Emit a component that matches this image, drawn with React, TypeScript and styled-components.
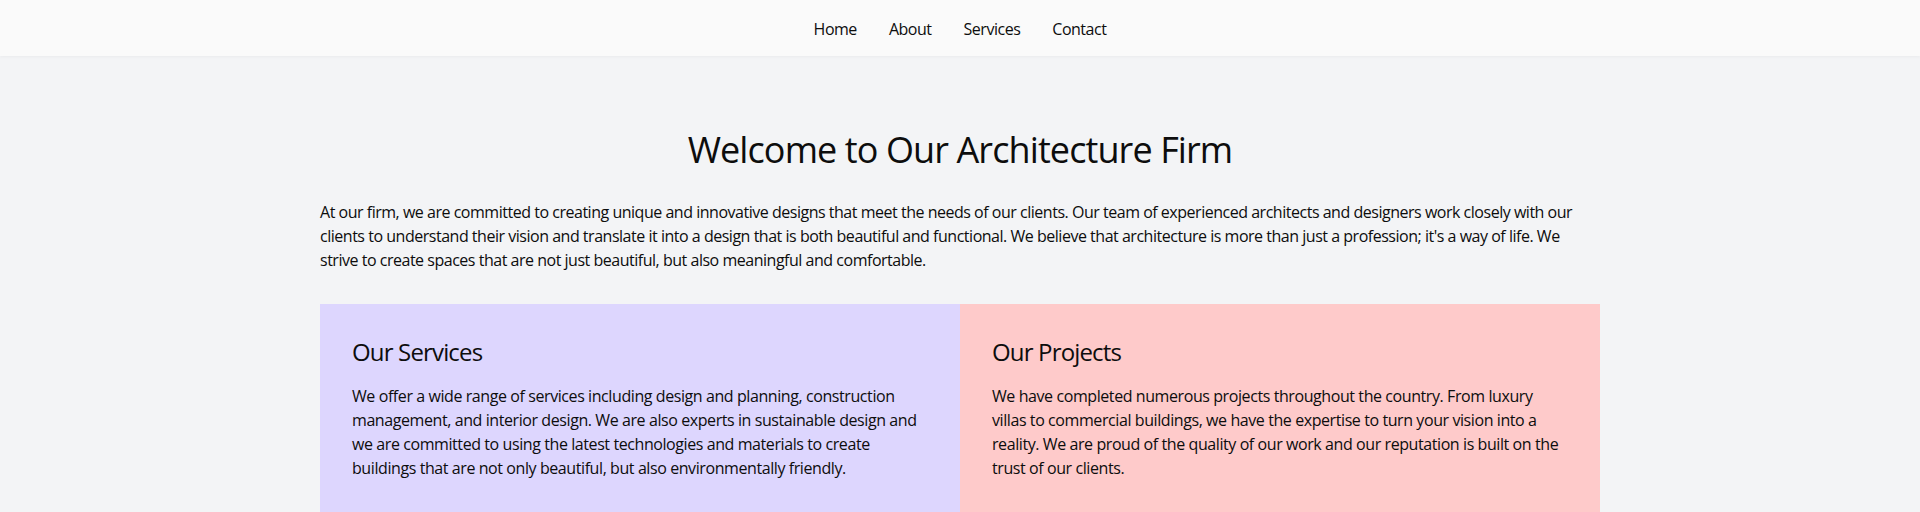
import React from "react";
import styled, { createGlobalStyle } from "styled-components";

const Global = createGlobalStyle`
  * { box-sizing: border-box; }
  body {
    margin: 0;
    background: #f3f4f6;
    color: #0d0d0d;
    font-family: "Open Sans", "Noto Sans", sans-serif;
    letter-spacing: -0.03em;
  }
`;

const Nav = styled.nav`
  background: #fafafa;
  height: 56px;
  padding-top: 2px;
  display: flex;
  justify-content: center;
  align-items: center;
  box-shadow: 0 1px 3px rgba(0, 0, 0, 0.04);
`;

const NavLink = styled.a`
  margin: 0 16px;
  font-size: 16px;
  line-height: 24px;
  color: #0d0d0d;
  text-decoration: none;
`;

const Main = styled.main`
  max-width: 1280px;
  margin: 0 auto;
  padding-top: 74px;
`;

const Title = styled.h1`
  margin: 0 0 30px;
  font-size: 36px;
  line-height: 40px;
  font-weight: 400;
  letter-spacing: -0.025em;
  text-align: center;
`;

const Intro = styled.p`
  margin: 0 0 32px;
  font-size: 16px;
  line-height: 24px;
`;

const Grid = styled.div`
  display: grid;
  grid-template-columns: 1fr 1fr;
`;

const Card = styled.section<{ $bg: string }>`
  background: ${(p) => p.$bg};
  padding: 32px;
`;

const CardTitle = styled.h2`
  margin: 0 0 16px;
  font-size: 24px;
  line-height: 32px;
  font-weight: 400;
  letter-spacing: -0.035em;
`;

const CardText = styled.p`
  margin: 0;
  font-size: 16px;
  line-height: 24px;
  letter-spacing: -0.026em;
`;

export default function App() {
  return (
    <>
      <Global />
      <Nav>
        <NavLink href="#">Home</NavLink>
        <NavLink href="#">About</NavLink>
        <NavLink href="#">Services</NavLink>
        <NavLink href="#">Contact</NavLink>
      </Nav>
      <Main>
        <Title>Welcome to Our Architecture Firm</Title>
        <Intro>
          At our firm, we are committed to creating unique and innovative designs that meet the needs of our clients. Our team of experienced architects and designers work closely with our clients to understand their vision and translate it into a design that is both beautiful and functional. We believe that architecture is more than just a profession; it's a way of life. We strive to create spaces that are not just beautiful, but also meaningful and comfortable.
        </Intro>
        <Grid>
          <Card $bg="#ddd6fe">
            <CardTitle>Our Services</CardTitle>
            <CardText>
              We offer a wide range of services including design and planning, construction management, and interior design. We are also experts in sustainable design and we are committed to using the latest technologies and materials to create buildings that are not only beautiful, but also environmentally friendly.
            </CardText>
          </Card>
          <Card $bg="#fecaca">
            <CardTitle>Our Projects</CardTitle>
            <CardText>
              We have completed numerous projects throughout the country. From luxury villas to commercial buildings, we have the expertise to turn your vision into a reality. We are proud of the quality of our work and our reputation is built on the trust of our clients.
            </CardText>
          </Card>
        </Grid>
      </Main>
    </>
  );
}
